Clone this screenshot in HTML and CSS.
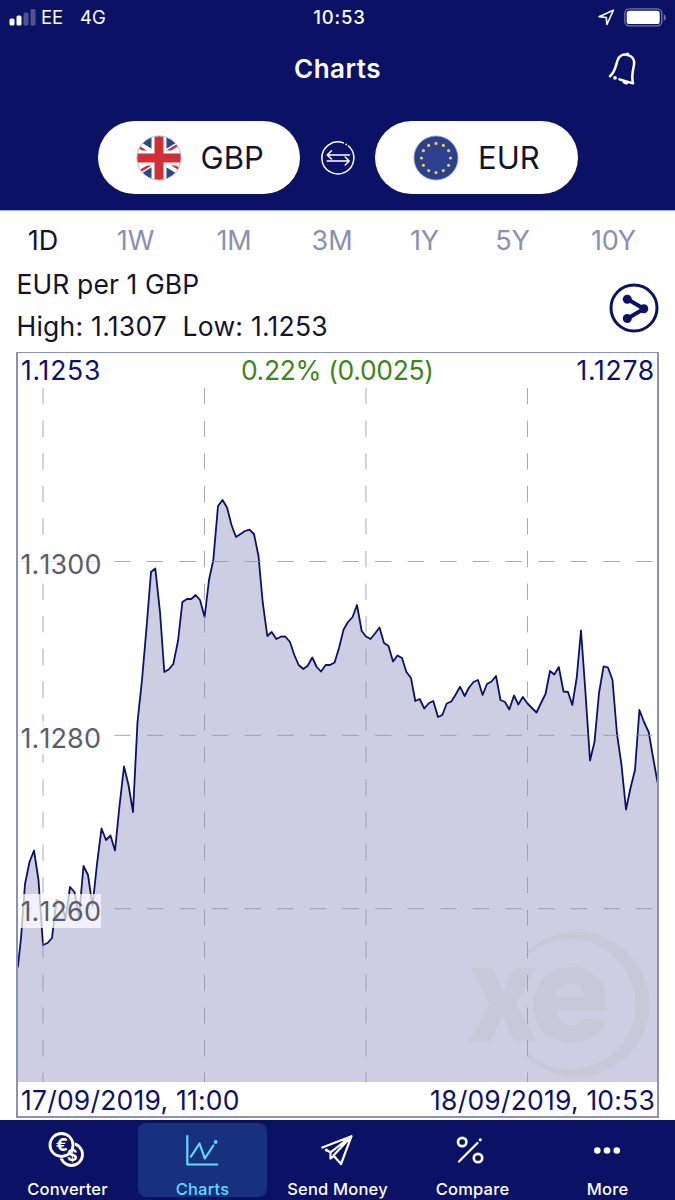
FILE: index.html
```html
<!DOCTYPE html>
<html lang="en">
<head>
<meta charset="utf-8">
<title>Charts</title>
<link rel="stylesheet" href="styles.css">
</head>
<body>
<div class="app">
  <header class="header">
    <div class="status">
      <div class="status-left">
        <svg class="signal" width="27" height="17" viewBox="0 0 27 17" fill="#fff"><rect x="0.500" y="9.500" width="5" height="7" rx="1.600"/><rect x="7.500" y="6.500" width="5" height="10" rx="1.600"/><g opacity=".28"><rect x="14.500" y="3.500" width="5" height="13" rx="1.600"/><rect x="21.500" y="0" width="5" height="16.500" rx="1.600"/></g></svg>
        <span class="carrier">EE</span><span class="network">4G</span>
      </div>
      <span class="clock">10:53</span>
      <div class="status-right">
        <svg width="17" height="17" viewBox="0 0 16 16" fill="none" stroke="#fff" stroke-width="1.5" stroke-linejoin="round"><path d="M14.5 1.2 1 7.2l6.8.8.6 6.6z"/></svg>
        <svg width="42" height="19" viewBox="0 0 42 19"><rect x=".8" y=".8" width="37" height="17" rx="4.5" fill="none" stroke="#7377a8" stroke-width="1.3"/><rect x="2.7" y="2.7" width="33" height="13.3" rx="2.6" fill="#fff"/><path d="M39.8 6.2q2 1 2 3.2t-2 3.2z" fill="#7377a8"/></svg>
      </div>
    </div>
    <div class="titlebar">
      <h1 class="title">Charts</h1>
      <svg class="bell" width="32" height="36" viewBox="0 0 32 36" fill="none" stroke="#fff" stroke-width="2.5" stroke-linecap="round" stroke-linejoin="round"><path d="M3 25.3C8 21 8.500 16 10.300 10 12 4.500 16.500 2.800 20.600 3.900 25.500 5.300 28 9 26.900 14.500 25.400 21 24.300 25 26 32.400L12.500 28.400"/><path d="M17 31q1.500 1.500 3 .6" stroke-width="3"/><path d="M20.600 3.600V3.200M8 26.900h.1" stroke-width="3.600"/></svg>
    </div>
    <div class="pair">
      <button class="currency">
        <svg width="46" height="46" viewBox="0 0 46 46"><defs><clipPath id="uk"><circle cx="23" cy="23" r="22"/></clipPath></defs><g clip-path="url(#uk)"><path fill="#30458d" d="M0 0h46v46H0z"/><path stroke="#fff" stroke-width="8" d="M-8 4 54 42M-8 42 54 4"/><path stroke="#cf3035" stroke-width="2.600" d="M-8 5.500 23 24.500M54 40.500 23 21.500M-8 43.500 23 24.500M54 2.500 23 21.500"/><path stroke="#fff" stroke-width="15" d="M23 0v46M0 23h46"/><path stroke="#cf3035" stroke-width="9" d="M23 0v46M0 23h46"/></g><circle cx="23" cy="23" r="22.200" fill="none" stroke="#c3c6d4" stroke-width="1"/></svg>
        <span class="code">GBP</span>
      </button>
      <svg class="swap" width="34" height="34" viewBox="0 0 34 34" fill="none" stroke="#fff" stroke-width="1.500" stroke-linecap="round" stroke-linejoin="round"><path d="M22.300 1.900a16 16 0 1 0 5.200 3.100"/><path d="M25.200 3.400h.1" stroke-width="1.700"/><path d="M28.500 14H6.800M10.500 9.800 6.200 14l4.300 4M6.200 20h22M24.200 16l4 4-4 4"/></svg>
      <button class="currency">
        <svg width="46" height="46" viewBox="0 0 46 46"><circle cx="23" cy="23" r="22" fill="#2b4190" stroke="#8d9ac1" stroke-width=".8"/><g fill="#f0cc48"><circle cx="23" cy="8.400" r="1.600"/><circle cx="30.300" cy="10.400" r="1.600"/><circle cx="35.600" cy="15.700" r="1.600"/><circle cx="37.600" cy="23" r="1.600"/><circle cx="35.600" cy="30.300" r="1.600"/><circle cx="30.300" cy="35.600" r="1.600"/><circle cx="23" cy="37.600" r="1.600"/><circle cx="15.700" cy="35.600" r="1.600"/><circle cx="10.400" cy="30.300" r="1.600"/><circle cx="8.400" cy="23" r="1.600"/><circle cx="10.400" cy="15.700" r="1.600"/><circle cx="15.700" cy="10.400" r="1.600"/></g></svg>
        <span class="code">EUR</span>
      </button>
    </div>
  </header>

  <nav class="ranges">
    <span class="range active">1D</span><span class="range">1W</span><span class="range">1M</span><span class="range">3M</span><span class="range">1Y</span><span class="range">5Y</span><span class="range">10Y</span>
  </nav>

  <section class="summary">
    <div class="rates">
      <p class="rate-title">EUR per 1 GBP</p>
      <p class="rate-range">High: 1.1307&nbsp; Low: 1.1253</p>
    </div>
    <svg class="share" width="50" height="50" viewBox="0 0 50 50" fill="none" stroke="#0b1266" stroke-width="3"><circle cx="25" cy="25" r="23"/><path d="M18.500 16.200 35 25.800 18.500 35.500" stroke-width="4"/><g fill="#0b1266" stroke="none"><circle cx="18.300" cy="16.300" r="4.500"/><circle cx="34.800" cy="25.700" r="4.500"/><circle cx="18.300" cy="35.500" r="4.500"/></g></svg>
  </section>

  <section class="chart">
    <div class="chart-row">
      <span class="open">1.1253</span><span class="change">0.22% (0.0025)</span><span class="close">1.1278</span>
    </div>
    <svg class="plot" width="639" height="694" viewBox="18 388 639 694">
      <!-- Filled series; the outline runs past the plot edges so only the curve is stroked inside it -->
      <path class="area" d="M15 1086V974L18 966 21 938 25 884 29.500 862 34 850.500 38.500 880 43 945 47.500 943 52 938 56.500 900 61 902 65.500 919 70 887 74.500 892 79 917 83.500 866 88 875 92.500 906 97 864 101.500 828.500 106 840 110.500 835.500 115 850.500 119.500 806 124 766.500 128.500 785 133 812 137.500 722 142 680 146.500 628 151 572 155.300 568.500 160 612 164.300 672 168.700 669.500 173.300 664 178 641 182.400 602 187 599H191.300L195.700 595 200 600 204.600 617 209 580 213.300 560 218 506 222.500 500 227 507.500 231.500 525 236 537 240.500 534 245 531 249.500 529.700 254 534 258.500 556 262.700 602 267.300 636 271.700 632 276.300 639 280.700 636.700 285.300 636.500 290 642 294.300 655 298.700 665 303.300 669 307.700 665.700 312.300 657.500 316.700 667 321 671.500 325.700 665H330L334.600 662.500 339 648 343.600 629.500 348 622 352.600 617 357 605 361.700 631 366 636.500 370.500 639 375 633.500 379.500 627.500 384 643 388.500 646 393 661.500 397.500 655.500 402 658 406.400 672 411 678 415.300 701 419.700 699 424.300 708.500 429 703 433.300 701 438 717 442.300 715 446.700 703.500 451.300 701.500 455.700 694.500 460 686.700 464.700 696 469 687.500 473.600 682 478 680 482.600 695 487 684 491.500 681.500 496 676 500.500 700 505 702 509.300 709.500 514 695.500 518.300 704.500 522.800 697 527.500 703.500 532 708 536.500 712.500 541 703 545.500 694 550 671 554.300 674.500 558.800 667 563.500 691.500 568 692 572.300 705 576.700 678 581 630.500 585.500 693 590 760.500 594.500 742 599 693 603.600 666.300 608 667.500 612.500 680 617 734 621.500 765 626 809.500 630.500 788 635 770 639.400 710 644 722 648.700 732 653 757 657.500 782 661 796V1086Z"/>
      <g class="watermark">
        <path d="M527.500 951.500A72.300 72.300 0 1 1 527.500 1057V1053A65 65 0 1 0 527.500 955.500Z"/>
        <text y="1041"><tspan x="468" textLength="70" lengthAdjust="spacingAndGlyphs">x</tspan><tspan x="529" textLength="82" lengthAdjust="spacingAndGlyphs">e</tspan></text>
      </g>
      <g class="grid">
        <path d="M43 388V1082M204.500 388V1082M366 388V1082M527.500 388V1082"/>
        <path d="M16.500 561.500H656M16.500 735.300H656M16.500 908.700H656"/>
      </g>
      <g class="label-bg"><path d="M18 547h83v34H18zM18 721h83v34H18zM18 894h83v34H18z"/></g>
      <g class="labels">
        <text x="20.500" y="574.300">1.1300</text>
        <text x="20.500" y="748">1.1280</text>
        <text x="20.500" y="921.300">1.1260</text>
      </g>
    </svg>
    <div class="chart-row dates"><span class="from">17/09/2019, 11:00</span><span class="to">18/09/2019, 10:53</span></div>
  </section>

  <footer class="tabs">
    <a class="tab"><svg class="coins" width="38" height="38" viewBox="0 0 38 38" fill="none" stroke="#fff" stroke-width="2.600"><circle cx="24.500" cy="24.500" r="11" stroke-width="2.800"/><circle cx="14.500" cy="15" r="13.500" fill="#0b1266" stroke="none"/><circle cx="14.500" cy="15" r="11.500" stroke-width="2.800"/><text class="euro" x="8.700" y="21.200">€</text><text class="dollar" x="20" y="31">$</text></svg><span>Converter</span></a>
    <a class="tab selected"><svg width="38" height="38" viewBox="0 0 38 38" fill="none" stroke="#62d9ff" stroke-width="2.200" stroke-linecap="round" stroke-linejoin="round"><path d="M4.300 6.200V34.500H34.300M8 26.500 16.500 13.500 21.800 28.500 30.400 15.500"/><circle cx="32.700" cy="12" r="1.900" fill="#62d9ff" stroke="none"/></svg><span>Charts</span></a>
    <a class="tab"><svg width="38" height="38" viewBox="0 0 38 38" fill="none" stroke="#fff" stroke-width="2.200" stroke-linecap="round" stroke-linejoin="round"><path d="M8.500 20.300 12.500 22.300V28.500M12.500 22.300 33.500 6.200 4.300 17.500M33.500 6.200 23 34 15.500 25.500 33.500 6.200M12.500 28.500 16 25.800"/><path d="M8.300 20.100h.1" stroke-width="3"/></svg><span>Send Money</span></a>
    <a class="tab"><svg class="percent" width="38" height="38" viewBox="0 0 38 38" fill="none" stroke="#fff" stroke-width="2.300" stroke-linecap="round"><circle cx="10.200" cy="12" r="4.200" stroke-width="2.700"/><circle cx="26" cy="28" r="4.200" stroke-width="2.700"/><path d="M7 31.500 25.500 13"/><circle cx="28.300" cy="9.800" r="1.600" fill="#fff" stroke="none"/></svg><span>Compare</span></a>
    <a class="tab"><svg width="38" height="38" viewBox="0 0 38 38" fill="#fff"><circle cx="9.300" cy="20.500" r="3.300"/><circle cx="19" cy="20.500" r="3.300"/><circle cx="28.800" cy="20.500" r="3.300"/></svg><span>More</span></a>
  </footer>
</div>
</body>
</html>
```

FILE: styles.css
```css
* { box-sizing: border-box; }
body { margin: 0; background: #fff; font-family: Inter, "Liberation Sans", sans-serif; color: #12142f; }
p, h1 { margin: 0; }
svg { display: block; flex: none; }
.app { width: 675px; height: 1200px; overflow: hidden; display: flex; flex-direction: column; }

.header { height: 210px; background: #0b1266; color: #fff; flex: none; }
.status { height: 34px; display: grid; grid-template-columns: 1fr auto 1fr; align-items: center; padding: 0 0 0 9px; font-size: 18.5px; line-height: 34px; }
.status-left { display: flex; align-items: center; }
.signal { margin-right: 5px; }
.carrier { letter-spacing: -.1px; }
.network { margin-left: 17px; letter-spacing: 0; }
.clock { font-weight: 500; letter-spacing: .8px; margin-left: -5px; }
.status-right { display: flex; align-items: center; justify-content: flex-end; gap: 9px; padding-right: 9px; }
.titlebar { height: 70px; display: grid; grid-template-columns: 1fr auto 1fr; align-items: center; }
.title { grid-column: 2; font-size: 26px; font-weight: 600; line-height: 70px; letter-spacing: .5px; }
.bell { justify-self: end; margin-right: 36px; }
.pair { display: flex; align-items: center; justify-content: center; gap: 20.500px; padding-top: 17px; }
.currency { width: 202.500px; height: 73px; border: 0; border-radius: 37px; background: #fff; display: flex; align-items: center; gap: 19px; padding: 0 0 0 38px; font-family: inherit; color: #12142f; }
.code { font-size: 31px; letter-spacing: 0; }

.ranges { height: 59px; border-top: 1px solid #a9b1df; display: grid; grid-template-columns: 86px 99px 98px 98px 87px 89px 1fr; align-items: center; flex: none; font-size: 27px; color: #8890b3; text-align: center; letter-spacing: -.1px; }
.range.active { color: #12142f; }
.range:last-child { padding-right: 5px; }

.summary { height: 83px; display: flex; justify-content: space-between; padding: 0 16px 0 16.500px; flex: none; }
.rates { font-size: 26.500px; line-height: 41.500px; margin-top: -5px; }
.rate-title { letter-spacing: .1px; }
.rate-range { letter-spacing: .25px; }
.share { margin-top: 14px; }

.chart { margin: 0 16px; width: 643px; height: 766px; border: 2px solid #8b92b4; border-width: 1.500px 2px 2px; display: flex; flex-direction: column; flex: none; }
.chart-row { height: 35px; display: flex; justify-content: space-between; line-height: 35px; font-size: 26.500px; letter-spacing: .75px; padding: 0 2px 0 3px; color: #0e1168; }
.change { color: #3e861b; letter-spacing: -.35px; margin-left: -3px; }
.dates { height: 34px; line-height: 37px; letter-spacing: .2px; }
.plot { width: 639px; height: 694px; }
.area { fill: #cdcee1; stroke: #0b1266; stroke-width: 1.800; stroke-linejoin: round; }
.grid { fill: none; stroke: #8d92ad; stroke-opacity: .8; stroke-width: 1; stroke-dasharray: 16.300 16.300; }
.label-bg { fill: #fff; fill-opacity: .72; }
.labels { fill: #5b5d6c; font-size: 27px; font-kerning: none; letter-spacing: .1px; }
.watermark { fill: #c7c8d8; font-size: 134px; font-weight: 800; }

.tabs { height: 82px; margin-top: 2px; background: #0b1266; display: grid; grid-template-columns: repeat(5, 1fr); padding: 3px 0; flex: none; }
.tab { margin: 0 3px; border-radius: 8px; color: #fff; font-size: 16.500px; font-weight: 500; letter-spacing: .2px; display: flex; flex-direction: column; align-items: center; padding-top: 7px; gap: 10px; line-height: 22px; white-space: nowrap; height: 74px; }
.tab svg { margin-right: 2px; }
.tab .percent { margin-right: 4px; }
.tab .coins { margin-right: 3px; }
.selected { background: #17317e; color: #62d9ff; }
.euro { fill: #fff; stroke: none; font-size: 18px; font-weight: 700; }
.dollar { fill: #fff; stroke: none; font-size: 16px; font-weight: 700; }
```
